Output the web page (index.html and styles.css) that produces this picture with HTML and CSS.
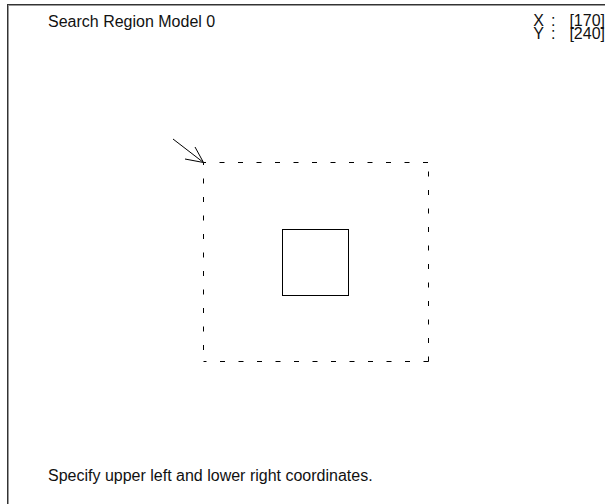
FILE: index.html
```html
<!DOCTYPE html>
<html>
<head>
<meta charset="utf-8">
<link rel="stylesheet" href="styles.css">
</head>
<body>
<div class="frame">
  <div class="header">
    <div class="title">Search Region Model 0</div>
    <div class="coords">
      <span>X</span><span class="colon">:</span><span>[170]</span>
      <span>Y</span><span class="colon">:</span><span>[240]</span>
    </div>
  </div>
  <svg class="canvas" width="597" height="428" viewBox="8 39 597 428" xmlns="http://www.w3.org/2000/svg">
    <g fill="none" stroke="#000" stroke-width="1">
      <line x1="173" y1="139" x2="203.5" y2="162.5"/>
      <line x1="195" y1="147" x2="203.5" y2="162.5"/>
      <line x1="185" y1="159" x2="203.5" y2="162.5"/>
      <g stroke-dasharray="5 13.5" stroke-dashoffset="2.5">
        <line x1="203.5" y1="162.5" x2="428.5" y2="162.5"/>
        <line x1="203.5" y1="162.5" x2="203.5" y2="361.5"/>
      </g>
      <g stroke-dasharray="5 13.5" stroke-dashoffset="0">
        <line x1="428.5" y1="361.5" x2="203.5" y2="361.5"/>
        <line x1="428.5" y1="361.5" x2="428.5" y2="162.5"/>
      </g>
      <rect x="282.5" y="229.5" width="66" height="66"/>
    </g>
  </svg>
  <div class="footer">Specify upper left and lower right coordinates.</div>
</div>
</body>
</html>
```
FILE: styles.css
```css
html, body {
  margin: 0;
  padding: 0;
  background: #fff;
  overflow: hidden;
}
body {
  font-family: "Liberation Sans", Arial, sans-serif;
  font-size: 16px;
  color: #111;
}
.frame {
  margin: 4px 0 0 7px;
  border-top: 1px solid #333;
  border-left: 1px solid #333;
  box-shadow: inset 1px 1px 0 #999;
  display: flex;
  flex-direction: column;
  box-sizing: border-box;
  height: 500px;
  overflow: hidden;
}
.header {
  display: flex;
  justify-content: space-between;
  align-items: flex-start;
  padding: 8px 0 0 40px;
  height: 26px;
}
.title {
  line-height: 18px;
}
.coords {
  margin-top: 1px;
  display: grid;
  grid-template-columns: auto auto auto;
  line-height: 13px;
}
.colon {
  padding: 0 14px 0 7px;
}
.canvas {
  display: block;
  flex: none;
}
.footer {
  line-height: 18px;
  padding-left: 40px;
}
```
